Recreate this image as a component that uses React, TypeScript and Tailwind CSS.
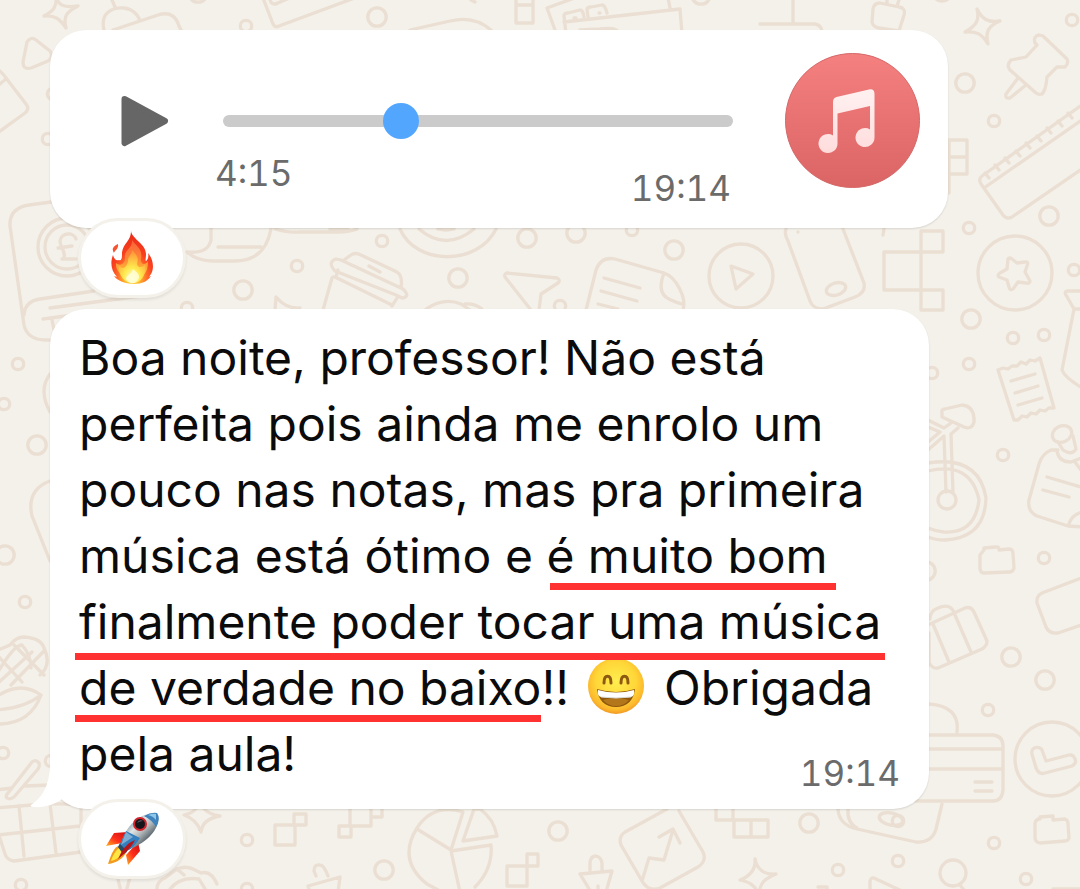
import type { ReactNode } from "react";

const SMALL_DOTS = [
  [246, 26], [297, 266], [53, 94], [48, 139], [1072, 20], [994, 121], [969, 228],
  [382, 241], [560, 306], [187, 308], [632, 230], [1074, 270], [1013, 338],
  [1044, 335], [969, 364], [932, 373], [1003, 455], [1044, 558], [988, 710],
  [994, 843], [1026, 879], [898, 821], [898, 861], [18, 364], [4, 404], [25, 602],
  [3, 753], [51, 761], [21, 885], [247, 840], [247, 889], [838, 870],
];

const BIG_DOTS = [
  [243, 290], [377, 17], [198, -7], [701, -5], [942, -8], [965, 83], [1049, 216],
  [527, 238], [458, 278], [576, 233], [674, 250], [971, 319], [1011, 657],
  [1045, 680], [926, 571], [37, 445], [5, 555], [384, 870], [558, 831], [809, 823],
];

function Wallpaper() {
  return (
    <svg
      className="absolute inset-0 h-full w-full"
      viewBox="0 0 1080 889"
      preserveAspectRatio="xMinYMin slice"
      fill="none"
      stroke="#eadfd2"
      strokeWidth="3.3"
      strokeLinecap="round"
      strokeLinejoin="round"
      aria-hidden="true"
    >
      {SMALL_DOTS.map(([x, y]) => (
        <circle key={`${x}-${y}`} cx={x} cy={y} r="5.7" />
      ))}
      {BIG_DOTS.map(([x, y]) => (
        <circle key={`${x}-${y}`} cx={x} cy={y} r="9.2" />
      ))}

      {/* sparkles */}
      <path d="M56 -4C58 5 63 8 78 6C66 12 63 17 66 28C60 19 55 15 44 16C54 11 57 6 56 -4Z" />
      <path d="M977 9C982 19 988 23 1000 21C988 26 985 32 988 44C982 34 977 31 965 32C976 26 980 20 977 9Z" />
      <path d="M200 796C201 809 207 814 220 816C208 818 202 823 201 832C198 823 193 818 184 815C194 813 199 808 200 796Z" />
      <path d="M755 859C757 869 764 875 776 874C764 879 760 883 759 894C754 885 750 882 740 880C750 876 756 870 755 859Z" />

      {/* top edge */}
      <path d="M27 42Q31 36 36 40L50 51Q54 57 48 61L31 68Q23 70 23 62Z" />
      <path d="M112 0L115 7M104 30C100 13 112 7 124 8C132 9 138 14 140 21M113 30L158 15Q174 10 179 26L181 30" />
      <path d="M263 -2L273 24Q275 28 279 26L360 -4M270 0Q272 6 278 3L294 -4" />
      <path d="M410 30L450 21Q474 15 491 30M471 0L475 2" />
      <path d="M516 -3H533V23H516ZM516 5H533" />
      <path d="M555 30L547 8L580 -4M566 34L564 16Q564 13 568 13L580 10Q583 10 584 17M564 22L680 9L682 34M588 17L587 10Q587 7 591 7L602 5Q605 5 607 13M668 -2L670 8M574 18H576M599 13H600M580 30L600 29Q617 27 618 32" />
      <path d="M793 0V24M760 24H815Q821 25 822 31M873 9Q874 3 880 3L899 7Q906 8 904 15L899 31M873 9L872 22Q873 27 879 28L899 31M887 3V-2M897 6L899 0" />

      {/* left side */}
      <path d="M-4 68Q2 72 6 78L26 104Q30 109 25 113L-4 134M6 79L-4 87" />
      <path d="M51 202L29 205Q9 208 10 226L24 325Q27 339 44 340H50M24 315Q25 301 40 299L94 291M43 319L95 312M52 320L54 330M50 308L140 296" />
      <circle cx="67" cy="247" r="29" />
      <circle cx="67" cy="247" r="22" />
      <path d="M76 239C74 232 61 232 60 241C60 247 66 251 64 258L62 259H76M58 248L72 246" />
      <path d="M50 374Q38 390 50 412M50 481Q26 490 32 516L50 561" />
      <path d="M-2 650L10 645Q16 637 24 637Q41 638 44 648Q52 665 40 675M-2 672Q14 645 22 645Q31 655 31 668M-2 656L22 682M14 645L44 675M-2 683L32 652M11 685L44 651M-4 697Q20 680 41 695Q25 708 -4 710M-4 724Q30 725 41 695" />
      <path d="M8 793L32 762Q36 759 39 763Q40 766 38 769L14 797Q10 800 7 798Q5 796 8 793ZM-4 790L12 788M25 786L50 785M-4 808L32 805Q75 802 81 807V852L14 861Q7 860 5 854L-3 829M-2 835L80 826M19 806L24 856M50 804L56 853" />

      {/* strip between the two messages */}
      <path d="M211 227V240Q208 254 187 252Q197 261 213 261H235Q265 261 271 229M218 247H261M275 229Q289 233 300 232H338Q350 232 357 229M330 229H348" />
      <path d="M400 229C416 266 478 266 496 229M419 229Q446 252 474 229M438 229Q446 231 454 229" />
      <path d="M323 310L332 278Q333 276 337 278L392 305M336 277L338 270M335 271Q327 262 336 259L341 260L403 289Q411 297 402 298L396 295ZM344 260L351 255Q355 252 361 255L397 272Q403 276 401 287M369 266L380 272M397 298L392 306" />
      <path d="M275 310L276 297Q286 309 300 308M426 309Q444 297 461 304L470 310M465 304Q474 303 482 309" />
      <path d="M507 273L557 278Q561 280 558 283L541 294L539 310M531 310L505 277Q504 274 507 273" />
      <path d="M586 310L596 270Q601 256 615 259L664 273M604 278L640 288M601 291L637 301M598 304L618 309M664 273C655 296 668 300 682 304M664 273C676 277 687 298 683 310" />
      <circle cx="741" cy="276" r="32" />
      <path d="M731 266L753 274L736 289Z" />
      <path d="M786 229Q784 234 788 241L810 301Q813 309 823 309L855 297Q866 293 864 283L843 229" />
      <ellipse cx="836" cy="289" rx="10" ry="6" transform="rotate(-18 836 289)" />
      <path d="M798 232V232.1M884 229L883 235" />
      <path d="M921 231H943V252H884V290H943V310H921Z" />

      {/* right side */}
      <path d="M949 140H967V174H949ZM949 157H967M949 193V170" />
      <path d="M1035 43Q1033 36 1039 35L1043 36L1067 59Q1069 63 1065 67H1057L1047 77Q1046 90 1042 94Q1039 95 1036 93L1010 70Q1006 65 1011 60L1026 57L1037 45ZM1018 78L1006 94Q1005 99 1010 98L1026 85" />
      <path d="M1086 102L982 176Q978 179 981 184L1003 215Q1007 220 1012 217L1086 166M984 188L1086 117M985 173L989 178M995 165L999 170M1005 158L1009 163M1016 151L1020 156M1026 143L1030 148M1037 136L1041 141M1047 128L1051 133M1058 121L1062 126M1068 113L1072 118" />
      <circle cx="1015" cy="273" r="37" />
      <path d="M1008 259Q1009 257 1012 259L1017 263L1025 262Q1029 261 1027 266L1025 272L1030 281Q1030 284 1026 283L1018 282L1013 289Q1010 291 1009 287L1007 280L999 277Q997 275 1000 273L1007 269Z" />
      <path d="M1084 291H1067Q1064 292 1066 295L1074 309L1062 370Q1065 378 1084 389M1074 309H1084" />
      <path d="M998 370L1003 368L1008 369L1012 366L1017 366L1021 362L1026 364L1030 360L1035 361L1040 358L1054 408L1049 408L1045 411L1040 410L1036 414L1031 413L1027 417L1022 416L1018 420L1014 420ZM1011 381L1035 374M1015 393L1038 386M1018 405L1042 398" />
      <path d="M942 413Q941 409 945 409L962 405Q973 406 974 418V422Q972 430 964 427L942 417ZM928 420L944 428L951 423M928 427L940 432L928 442M928 450L944 436L946 492M951 434L953 492M951 434L958 428M928 463Q979 455 986 498Q985 538 945 540Q935 540 928 537M928 471Q971 461 979 500Q975 534 944 532Q935 531 928 528" />
      <circle cx="947" cy="500" r="9" />
      <ellipse cx="1062" cy="434" rx="10" ry="8" transform="rotate(-25 1062 434)" />
      <path d="M1058 442L1063 450Q1072 456 1076 449L1073 436M1058 450L1051 450Q1042 454 1039 464L1029 500Q1027 511 1037 516L1068 526Q1072 513 1084 512M1057 450Q1058 462 1071 462L1084 457M1047 477L1084 488M1043 490L1069 497M1075 462L1084 474M1068 526L1084 527" />
      <path d="M980 555L984 550V548L996 547Q999 546 999 550L1009 549Q1013 549 1013 554L1014 568Q1013 572 1009 572L984 573Q981 573 980 569Z" />
      <path d="M1084 577L1042 593Q1036 596 1037 603L1046 627Q1049 634 1058 633L1084 624" />
      <path d="M930 624L965 608Q971 606 974 612L987 641Q987 646 982 649L938 668Q933 669 930 664M933 624L949 662M955 615L971 652M930 619Q930 611 938 608Q951 602 955 615M929 633V665" />
      <path d="M929 704Q960 706 957 732M928 735H993Q1003 736 1003 746V790Q1002 801 993 801H915M928 749H1003M928 769H1003M975 782H992M975 791H992" />
      <circle cx="1052" cy="759" r="37" />
      <path d="M1032 754L1036 768Q1039 775 1045 773L1072 766Q1077 763 1075 759Q1073 754 1069 755L1046 761L1042 750Q1040 746 1034 748Q1031 750 1032 754Z" />
      <path d="M1035 823Q1036 819 1040 819L1040 817L1053 816V820L1065 819Q1068 820 1068 824L1069 838Q1068 841 1065 841L1040 843Q1035 842 1035 838ZM1053 889H1084" />

      {/* bottom edge */}
      <path d="M942 804L936 829Q932 843 916 842L857 829Q839 825 838 809M848 809Q847 823 857 828" />
      <ellipse cx="891" cy="819" rx="12" ry="6" transform="rotate(12 891 819)" />
      <circle cx="953" cy="873" r="13" />
      <path d="M960 885L964 890M870 892V881Q871 876 876 879L904 892M818 887H827V892" />
      <path d="M275 825H295V845H275ZM294 814H306V825H294Z" />
      <path d="M350 809V826H371V809M339 826H351V837H339ZM371 817H382V809" />
      <path d="M463 812Q433 803 417 828Q397 860 427 884L440 891M463 812L451 850L417 829M451 851L491 845Q493 869 475 887M451 851L460 892M474 809L463 841L497 836Q494 819 480 809Z" />
      <path d="M507 866H527V886H507ZM527 854H538V866H527Z" />
      <path d="M316 876L314 871Q314 864 320 865Q324 865 328 876M310 892L308 886L340 877L338 892" />
      <path d="M590 870V862Q591 856 596 856Q601 857 602 863V870M580 874L612 871L606 892M580 874L591 892M598 886V892" />
      <path d="M667 809L625 832Q618 837 621 845L642 881Q648 892 660 888L698 867Q707 861 703 852L679 811M642 881L649 858L664 860L673 830M659 837L673 829L680 843" />
      <path d="M716 809V820H733V809M734 820H768V837H734ZM751 820V837" />
      <path d="M118 879L121 892M130 877L126 892M157 892Q156 881 165 878L177 869Q187 865 195 870L201 873Q211 870 217 884M168 892Q178 876 199 879L207 892M177 869L184 875" />
    </svg>
  );
}

function FireEmoji() {
  return (
    <svg className="h-14 w-11" viewBox="0 0 44 56" role="img" aria-label="fire">
      <defs>
        <radialGradient id="flame" cx="0.5" cy="0.9" r="0.82">
          <stop offset="0" stopColor="#ffe84f" />
          <stop offset="0.22" stopColor="#ffb52e" />
          <stop offset="0.42" stopColor="#ff6f2a" />
          <stop offset="0.62" stopColor="#f9401f" />
          <stop offset="1" stopColor="#ec2d17" />
        </radialGradient>
        <linearGradient id="flame-mid" x1="0" y1="0" x2="0" y2="1">
          <stop offset="0" stopColor="#f9613a" />
          <stop offset="0.5" stopColor="#ff8a35" />
          <stop offset="1" stopColor="#ffd83c" />
        </linearGradient>
        <radialGradient id="flame-core" cx="0.5" cy="0.85" r="0.8">
          <stop offset="0" stopColor="#ffffd0" />
          <stop offset="0.4" stopColor="#ffe94e" />
          <stop offset="1" stopColor="#ff9638" />
        </radialGradient>
      </defs>
      <path fill="url(#flame)" d="M21 1C22 9 36 14 36 24C36 28 35 31 36 31C38 30 39 26 38 23C44 30 44 39 41 44L39 47L41 46C38 51 32 54 24 54C14 54 7 50 4 46L7 47C1 41 0 32 3 25C4 29 6 31 9 30C11 31 12 29 12 25C12 13 21 12 21 1Z" />
      <path fill="#f85331" d="M8 14C9 19 4 21 4 23C1 18 4 16 8 14Z" />
      <path fill="url(#flame-mid)" d="M22 10C26 16 33 19 31 29C30 34 35 36 38 31C38 43 33 49 22 49C12 48 5 40 6 33C11 37 15 33 15 28C14 19 23 19 22 10Z" />
      <path fill="url(#flame-core)" d="M22 20C27 25 29 28 27 34C28 39 34 37 35 34C37 43 32 53 23 53C14 53 8 45 9 36C14 41 18 35 18 30C18 26 22 25 22 20Z" />
      <path fill="#ffffdc" d="M23 39C27 43 29 43 29 48Q23 58 16 49C16 45 21 45 23 39Z" opacity="0.8" />
    </svg>
  );
}

function RocketEmoji() {
  return (
    <svg className="h-14 w-14" viewBox="0 0 56 56" role="img" aria-label="rocket">
      <defs>
        <linearGradient id="hull" x1="0.2" y1="0.2" x2="0.75" y2="0.75">
          <stop offset="0" stopColor="#718ba0" />
          <stop offset="0.35" stopColor="#e0e5e5" />
          <stop offset="0.62" stopColor="#b1b7b9" />
          <stop offset="1" stopColor="#45525c" />
        </linearGradient>
        <linearGradient id="fin" x1="1" y1="0" x2="0" y2="1">
          <stop offset="0" stopColor="#c90b12" />
          <stop offset="0.55" stopColor="#ff301b" />
          <stop offset="1" stopColor="#ffb321" />
        </linearGradient>
      </defs>
      <path fill="url(#fin)" d="M24 21L10 22L2 35L18 32Z" />
      <path fill="url(#fin)" d="M34 31L36 40L24 54L22 44Z" />
      <path fill="#f29b1d" d="M14 35C9 38 7 44 4 53C13 52 19 47 22 42Z" />
      <path fill="#ffe642" d="M15 37C11 40 8 46 7 50C15 48 17 44 19 41Z" />
      <path fill="#284a64" d="M16 32Q21 34 23 41L19 43L14 36Z" />
      <path fill="url(#hull)" d="M17 33C22 15 34 2 53 2C58 11 50 29 24 39Z" />
      <path fill="#3f82bc" d="M40 5Q47 1 53 2Q57 8 52 16Q48 9 40 5Z" />
      <path fill="#8dc8e9" d="M44 4Q50 2 52 3L52 9Q49 5 44 4Z" />
      <path fill="#347fbd" d="M22 20L36 27Q31 36 23 40L16 33Z" />
      <path fill="#80add2" d="M22 21L29 26L17 34Z" />
      <path fill="#b71518" d="M31 29Q27 38 14 48Q20 33 31 29Z" />
      <circle cx="36" cy="13" r="7" fill="#d0232c" />
      <circle cx="36" cy="13" r="5" fill="#15151b" />
      <path fill="#69606a" d="M33 12Q35 8 39 10Q36 10 33 12Z" />
    </svg>
  );
}

function GrinEmoji() {
  return (
    <svg className="mx-1.5 inline-block size-14 align-[-9px]" viewBox="0 0 56 56" role="img" aria-label="grinning face with smiling eyes">
      <defs>
        <radialGradient id="face" cx="0.5" cy="0.42" r="0.6">
          <stop offset="0" stopColor="#ffee4f" />
          <stop offset="0.6" stopColor="#ffd638" />
          <stop offset="0.85" stopColor="#fcb82c" />
          <stop offset="1" stopColor="#ee8f20" />
        </radialGradient>
      </defs>
      <circle cx="28" cy="28" r="28" fill="url(#face)" />
      <path d="M16 25C16 16 23 16 23 25M33 25C33 16 40 16 40 25" fill="none" stroke="#8e5910" strokeWidth="3" strokeLinecap="round" />
      <path fill="#8f570d" d="M9 31Q28 37 47 31C46 42 39 49 28 49S10 42 9 31Z" />
      <path fill="#b3761a" d="M15 42Q28 38 41 42Q36 48 28 48T15 42Z" />
      <path fill="#fff" d="M10 32Q28 37 46 32Q47 38 43 39Q28 41 13 39Q9 38 10 32Z" />
      <path fill="none" stroke="#d9d9d4" d="M13 39Q28 41 43 39" />
    </svg>
  );
}

function MusicBadge() {
  return (
    <svg className="size-[135px] shrink-0" viewBox="0 0 135 135" role="img" aria-label="Audio file">
      <defs>
        <linearGradient id="badge" x1="0" y1="0" x2="0" y2="1">
          <stop offset="0" stopColor="#f58080" />
          <stop offset="1" stopColor="#db6464" />
        </linearGradient>
        <linearGradient id="note" x1="0" y1="0" x2="0" y2="1">
          <stop offset="0" stopColor="#fff1f1" />
          <stop offset="1" stopColor="#ffdcdc" />
        </linearGradient>
      </defs>
      <circle cx="67.5" cy="67.5" r="67" fill="url(#badge)" stroke="#d56868" />
      <path
        fill="url(#note)"
        d="M51.5 44L84 36.5Q89.5 35.5 89.5 41V84.5A9.5 9.5 0 1 1 85 76.5V53L52.5 60.5V91A9.5 9.5 0 1 1 48 82.5V49Q48 45 51.5 44Z"
      />
    </svg>
  );
}

function Reaction({ children }: { children: ReactNode }) {
  return (
    <button
      type="button"
      className="relative z-10 -mt-[10px] ml-7 flex h-20 w-[108px] items-center justify-center rounded-full border-[3px] border-[#f4f1ea] bg-white shadow-[0_2px_3px_rgba(0,0,0,0.08)]"
    >
      {children}
    </button>
  );
}

// red marker line drawn below a piece of text
function Marked({ children, line = "top-[60px] -left-1 right-0" }: { children: ReactNode; line?: string }) {
  return (
    <mark className="relative inline-block bg-transparent text-inherit">
      {children}
      <span className={`absolute z-10 h-[7px] bg-[#ff3131] ${line}`} />
    </mark>
  );
}

export default function App() {
  return (
    <div className="relative min-h-screen overflow-hidden bg-[#f4f1ea] font-['Inter',sans-serif]">
      <Wallpaper />

      <main className="relative px-[50px] pt-[30px]">
        {/* Audio message */}
        <section className="flex max-w-[898px] items-start rounded-[36px] bg-white pt-[23px] pr-7 pb-5 pl-[71px] shadow-[0_1px_2px_rgba(0,0,0,0.12)]">
          <button type="button" aria-label="Play" className="flex h-[135px] w-12 shrink-0 items-center">
            <svg className="h-[52px] w-12" viewBox="0 0 48 52" aria-hidden="true">
              <path d="M3.5 4L44 26L3.5 48Z" fill="#666" stroke="#666" strokeWidth="6" strokeLinejoin="round" />
            </svg>
          </button>

          <div className="mr-[52px] ml-[54px] min-w-0 flex-1 pt-[50px]">
            <input
              type="range"
              aria-label="Seek"
              min={0}
              max={1154}
              defaultValue={390}
              className="block h-9 w-full appearance-none bg-transparent [&::-webkit-slider-runnable-track]:h-3 [&::-webkit-slider-runnable-track]:rounded-full [&::-webkit-slider-runnable-track]:bg-[#cbcbcb] [&::-webkit-slider-thumb]:-mt-3 [&::-webkit-slider-thumb]:size-9 [&::-webkit-slider-thumb]:appearance-none [&::-webkit-slider-thumb]:rounded-full [&::-webkit-slider-thumb]:bg-[#53a6fd]"
            />
            <div className="mr-0.5 -ml-2 flex justify-between pt-3.5 text-[35px] leading-10 text-[#6b6b6b] tabular-nums">
              <span>4:15</span>
              <time className="pt-[15px]">19:14</time>
            </div>
          </div>

          <MusicBadge />
        </section>
        <Reaction>
          <FireEmoji />
        </Reaction>

        {/* Text message */}
        <section className="relative mt-[11px] max-w-[879px] rounded-[36px] bg-white pt-4 pr-7 pb-[22px] pl-[29px] shadow-[0_1px_2px_rgba(0,0,0,0.12)]">
          <svg className="absolute bottom-0 -left-5 h-12 w-12" viewBox="0 0 48 48" aria-hidden="true">
            <path d="M20 0C20 24 13 36 1 44C0 45 1 46 3 46C16 47 25 43 32 38L44 0Z" fill="#fff" />
          </svg>
          <p className="text-5xl leading-[66px] whitespace-nowrap text-[#0b0b0b]">
            Boa noite, professor! Não está
            <br />
            perfeita pois ainda me enrolo um
            <br />
            pouco nas notas, mas pra primeira
            <br />
            música está ótimo e <Marked line="top-[60px] left-1 -right-2">é muito bom</Marked>
            <br />
            <Marked line="top-16 -left-1 -right-1">finalmente poder tocar uma música</Marked>
            <br />
            <Marked>de verdade no baixo</Marked>!! <GrinEmoji /> Obrigada
            <br />
            pela aula!
          </p>
          <time className="absolute right-[29px] bottom-4 text-[35px] leading-10 text-[#6b6b6b] tabular-nums">
            19:14
          </time>
        </section>
        <Reaction>
          <RocketEmoji />
        </Reaction>
      </main>
    </div>
  );
}
